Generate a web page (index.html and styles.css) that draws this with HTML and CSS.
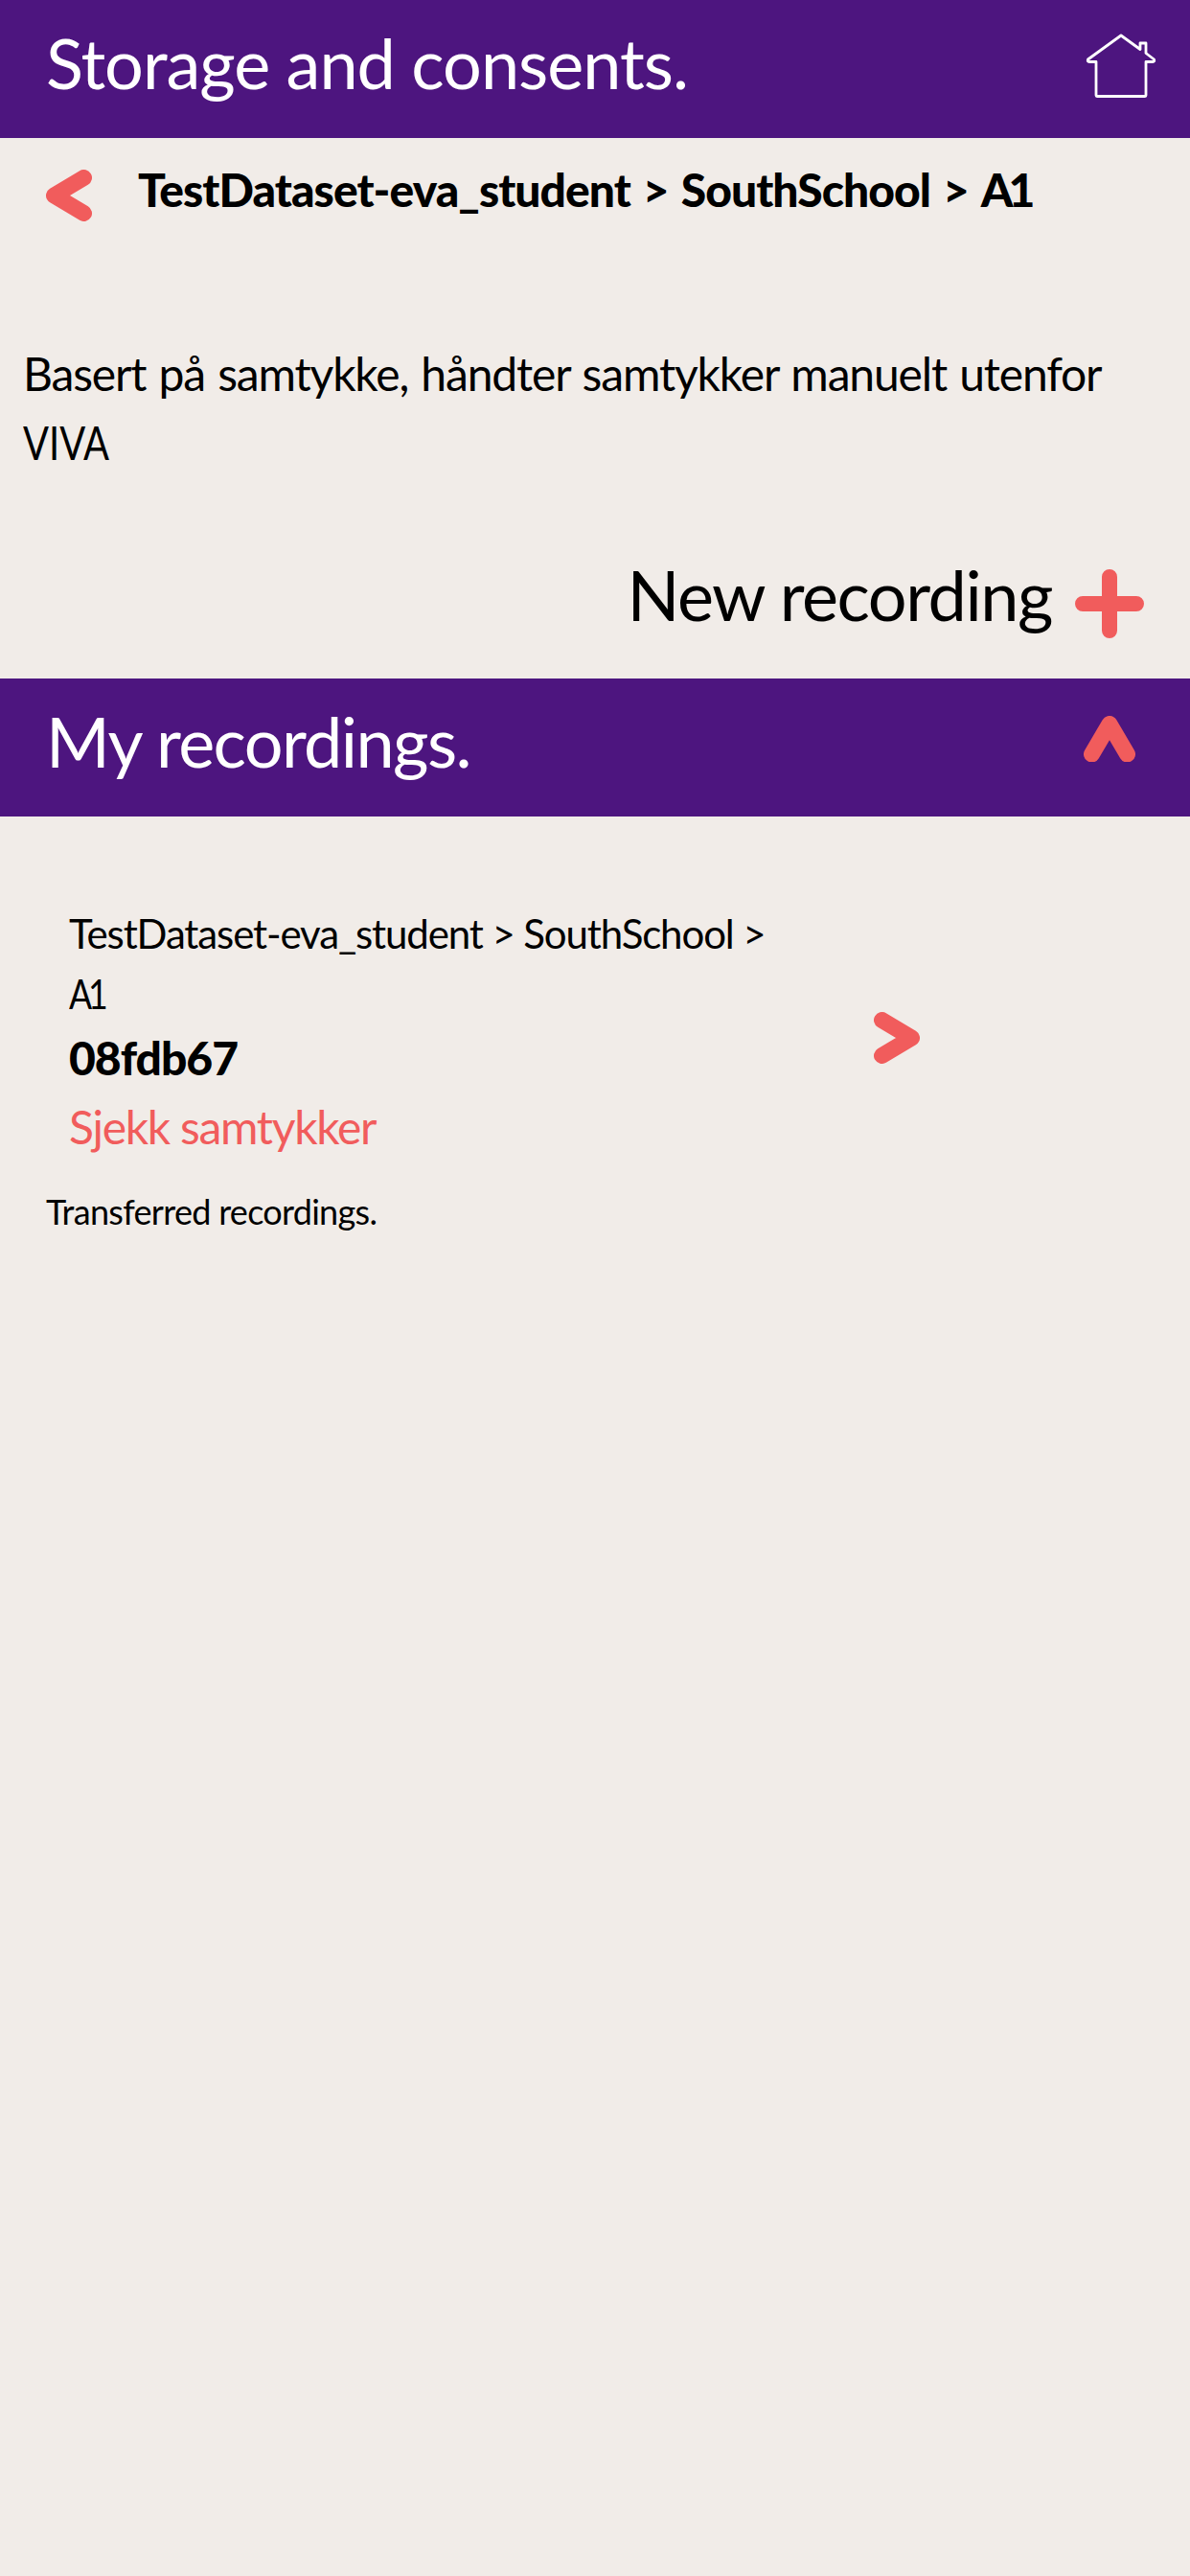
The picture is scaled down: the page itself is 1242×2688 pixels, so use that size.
FILE: index.html
```html
<!DOCTYPE html>
<html lang="en">
<head>
<meta charset="utf-8">
<meta name="viewport" content="width=device-width">
<title>Storage and consents</title>
<link rel="stylesheet" href="styles.css">
</head>
<body>
<header class="bar">
  <h1 class="bar-title title-storage">Storage and consents.</h1>
  <svg class="home" viewBox="0 0 74 68" aria-hidden="true"><path d="M37 3 L57 17.500 V11 H63 V21.500 L71.500 28 Q72.500 30.500 70 30.500 H63 V65.500 Q63 66.500 62 66.500 H12 Q11 66.500 11 65.500 V30.500 H4 Q1.500 30.500 2.500 28 Z"/></svg>
</header>
<nav class="crumbs">
  <svg class="chevron" viewBox="0 0 48 54" aria-hidden="true"><path d="M39.500 8.500 L8.500 27 L39.500 45.500"/></svg>
  <p class="crumb-path">TestDataset-eva_student &gt; SouthSchool &gt; <span class="group">A1</span></p>
</nav>
<p class="consent">Basert på samtykke, håndter samtykker manuelt utenfor <br><span class="viva">VIVA</span></p>
<div class="new-recording">
  <span class="new-label">New recording</span>
  <svg class="plus" viewBox="0 0 72 72" aria-hidden="true"><path d="M36 8 V64 M8 36 H64"/></svg>
</div>
<section class="bar bar-recordings">
  <h2 class="bar-title title-recordings">My recordings.</h2>
  <svg class="caret" viewBox="0 0 54 48" aria-hidden="true"><path d="M8.500 40 L27 8.500 L45.500 40"/></svg>
</section>
<article class="recording">
  <div class="recording-text">
    <p class="recording-path">TestDataset-eva_student &gt; SouthSchool &gt; <br><span class="group group-narrow">A1</span></p>
    <p class="recording-id">08fdb67</p>
    <p class="recording-check">Sjekk samtykker</p>
  </div>
  <svg class="chevron" viewBox="0 0 48 54" aria-hidden="true"><path d="M8.500 8.500 L39.500 27 L8.500 45.500"/></svg>
</article>
<p class="transferred">Transferred recordings.</p>
</body>
</html>
```
FILE: styles.css
```css
* { box-sizing: border-box; }
body { margin: 0; background: #f1ece8; color: #000; font-family: Lato, "Liberation Sans", sans-serif; }
h1, h2, p { margin: 0; font-weight: 400; }
svg { display: block; flex: none; fill: none; stroke: #f15c5c; stroke-width: 17; stroke-linecap: round; stroke-linejoin: round; }

.bar { display: flex; align-items: center; justify-content: space-between; height: 144px; padding: 0 35px 0 48px; background: #4d157f; color: #fff; }
.bar-title { font-size: 72px; line-height: 108px; padding-bottom: 14px; white-space: nowrap; }
.title-storage { letter-spacing: -1px; }
.title-recordings { letter-spacing: -1.6px; }
.home { width: 74px; height: 68px; margin-bottom: 8px; stroke: #fff; stroke-width: 2.8; }

.crumbs { display: flex; gap: 48px; height: 210px; padding: 18px 48px 0; }
.crumbs .chevron { margin-top: 15px; }
.chevron { width: 48px; height: 54px; }
.crumb-path { font-size: 48px; font-weight: 900; line-height: 72px; letter-spacing: -0.95px; word-spacing: 2.5px; white-space: nowrap; }

.consent { height: 212px; padding: 0 24px; font-size: 48px; line-height: 72px; letter-spacing: -1.15px; word-spacing: 2px; white-space: nowrap; }
.viva { display: inline-block; letter-spacing: 0; transform: scaleX(0.83); transform-origin: left; }
.group { letter-spacing: -5px; }
.group-narrow { display: inline-block; transform: scaleX(0.85); transform-origin: left; }

.new-recording { display: flex; justify-content: flex-end; gap: 24px; height: 142px; padding-right: 48px; }
.new-label { font-size: 72px; line-height: 108px; letter-spacing: -1.45px; }
.plus { width: 72px; height: 72px; margin-top: 28px; stroke-width: 16; }

.bar-recordings { padding-right: 57px; }
.caret { width: 54px; height: 48px; align-self: flex-start; margin-top: 39px; }

.recording { display: flex; justify-content: space-between; width: 960px; padding: 91px 0 0 72px; }
.recording .chevron { margin-top: 113px; }
.recording-path { height: 125px; font-size: 42px; line-height: 63px; letter-spacing: -1.12px; white-space: nowrap; }
.recording-id { font-size: 48px; line-height: 72px; font-weight: 900; letter-spacing: -1px; }
.recording-check { font-size: 48px; line-height: 72px; letter-spacing: -1.3px; color: #f15c5c; }
.transferred { padding: 25px 48px; font-size: 36px; line-height: 54px; letter-spacing: -0.7px; }
```
